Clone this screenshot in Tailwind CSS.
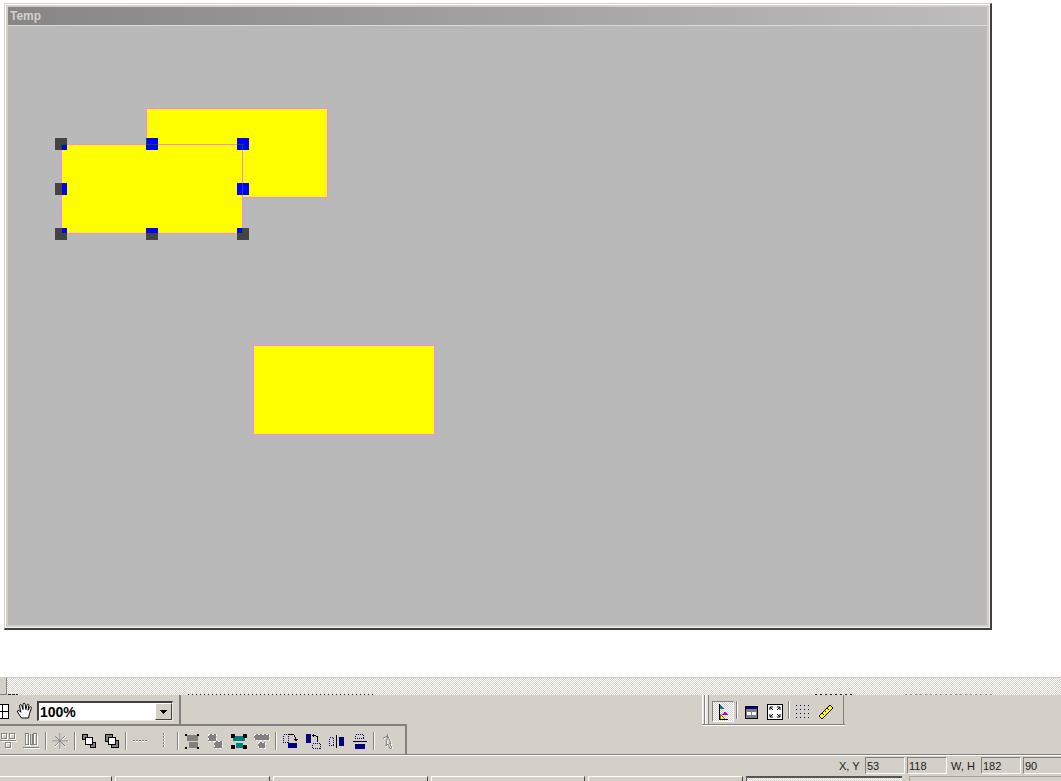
<!DOCTYPE html>
<html>
<head>
<meta charset="utf-8">
<script src="https://cdn.jsdelivr.net/npm/@tailwindcss/browser@4"></script>
</head>
<body class="bg-white overflow-hidden font-['Liberation_Sans',sans-serif]">
<div class="w-[1061px] h-[781px] overflow-hidden flex flex-col">
  <!-- upper white area with child window -->
  <div class="h-[677px] pl-[4px] pt-[3px] shrink-0">
    <div class="w-[988px] h-[627px] border-t border-l border-t-[#d4d0c8] border-l-[#d4d0c8] border-r-2 border-b-2 border-r-[#404040] border-b-[#404040]">
      <div class="w-full h-full border-t border-l border-white border-r border-b border-r-[#f0efe9] border-b-[#f0efe9] p-[2px] bg-[#d4d0c8] flex flex-col">
        <div class="h-[18px] shrink-0 bg-linear-to-r from-[#868686] to-[#bdbdbd] pl-[2px] flex items-center text-[12px] leading-none font-bold text-[#d4d0c8]">Temp</div>
        <div class="h-[1px] shrink-0 bg-[#dcdad2]"></div>
        <div class="relative flex-1 bg-[#b9b9b9]">
          <div class="absolute left-[138px] top-[82px] w-[182px] h-[90px] bg-[#ffff00] border border-[#ff80ff]"></div>
          <div class="absolute left-[245px] top-[319px] w-[182px] h-[90px] bg-[#ffff00] border border-[#ff80ff]"></div>
          <div class="absolute left-[53px] top-[118px] w-[182px] h-[90px] bg-[#ffff00] border border-[#ff80ff]"></div>
          <!-- handles -->
          <div class="absolute left-[47px] top-[112px] w-[12px] h-[12px] bg-[#444444]"><div class="absolute left-[6px] top-[6px] w-[6px] h-[6px] bg-[#0000ff] border-t border-l border-[#006400]"></div></div>
          <div class="absolute left-[138px] top-[112px] w-[12px] h-[12px] bg-[#0000ff]"><div class="absolute left-0 top-0 w-[12px] h-[7px] border-l border-b border-[#006400]"></div></div>
          <div class="absolute left-[229px] top-[112px] w-[12px] h-[12px] bg-[#0000ff]"><div class="absolute left-0 top-[6px] w-[6px] h-[6px] border-t border-r border-[#006400]"></div></div>
          <div class="absolute left-[47px] top-[157px] w-[12px] h-[12px] bg-[#444444]"><div class="absolute left-[7px] top-0 w-[5px] h-[12px] bg-[#0000ff]"></div></div>
          <div class="absolute left-[229px] top-[157px] w-[12px] h-[12px] bg-[#0000ff]"><div class="absolute left-[5px] top-0 w-[1px] h-[12px] bg-[#3030e8]"></div></div>
          <div class="absolute left-[47px] top-[202px] w-[12px] h-[12px] bg-[#444444]"><div class="absolute left-[7px] top-0 w-[5px] h-[5px] bg-[#0000ff]"></div></div>
          <div class="absolute left-[138px] top-[202px] w-[12px] h-[12px] bg-[#444444]"><div class="absolute left-0 top-0 w-[12px] h-[5px] bg-[#0000ff]"></div></div>
          <div class="absolute left-[229px] top-[202px] w-[12px] h-[12px] bg-[#444444]"><div class="absolute left-0 top-0 w-[6px] h-[5px] bg-[#0000ff] border-r border-[#006400]"></div></div>
        </div>
      </div>
    </div>
  </div>

  <!-- hatched scroll strip -->
  <div class="h-[18px] shrink-0 border-t border-[#c8c8c8] flex items-end bg-[repeating-conic-gradient(#d4d0c8_0_25%,#ffffff_0_50%)] bg-[length:2px_2px]">
    <div class="w-[7px] h-[17px] bg-[#d4d0c8] border-r border-b border-[#808080]"></div>
    <div class="ml-[1px] w-[10px] h-[1px] bg-[repeating-linear-gradient(90deg,#222_0_3px,transparent_3px_4px)]"></div>
    <div class="ml-[170px] w-[187px] h-[1px] bg-[repeating-linear-gradient(90deg,#222_0_1px,transparent_1px_4px)]"></div>
    <div class="ml-[440px] w-[40px] h-[1px] bg-[repeating-linear-gradient(90deg,#222_0_2px,transparent_2px_5px)]"></div>
    <div class="ml-[50px] w-[90px] h-[1px] bg-[repeating-linear-gradient(90deg,#999_0_2px,transparent_2px_5px)]"></div>
  </div>

  <!-- toolbar rows -->
  <div class="h-[29px] shrink-0 bg-[#d4d0c8] flex">
    <div class="w-[181px] h-full flex items-center border-r-2 border-r-[#808080] pr-[6px] pt-[3px]">
      <svg width="9" height="17" viewBox="0 0 9 17" shape-rendering="crispEdges" class="shrink-0"><rect x="-5" y="1.5" width="13" height="14" fill="#fff" stroke="#000"/><path d="M2.5 1.5V15.5M-5 8.5H8" stroke="#000"/></svg>
      <svg width="18" height="18" viewBox="0 0 18 17" class="ml-[7px] shrink-0"><path d="M5.5 15.5 L1.5 9.5 C0.8 8 2.6 7.2 3.6 8.5 L4.8 9.8 L3.6 3.5 C3.4 2 5.3 1.6 5.8 3.2 L7 7 L7 1.8 C7.1 0.4 9 0.4 9.2 1.8 L9.8 7 L11 2.6 C11.4 1.2 13.2 1.6 12.9 3 L12 7.8 L13.6 4.8 C14.3 3.7 15.9 4.4 15.3 5.8 L13.5 11 L12.5 15.5 Z" fill="#fff" stroke="#000" stroke-width="1"/></svg>
      <div class="ml-[3px] w-[136px] h-[20px] shrink-0 flex bg-white border-t-2 border-l-2 border-t-[#404040] border-l-[#404040] border-r border-b border-r-[#ece9e0] border-b-[#ece9e0]">
        <div class="flex-1 pl-[1px] text-[14px] font-bold leading-[18px] text-black">100%</div>
        <div class="w-[17px] h-[17px] bg-[#d4d0c8] border-t border-l border-t-white border-l-white border-r border-b border-r-[#404040] border-b-[#404040] flex items-center justify-center">
          <svg width="7" height="4" viewBox="0 0 7 4" shape-rendering="crispEdges"><path d="M0 0H7L3.5 4Z" fill="#000"/></svg>
        </div>
      </div>
    </div>
    <div class="w-[521px] h-full"></div>
    <div class="w-[143px] h-[29px] flex items-start relative">
      <div class="w-[3px] h-[29px] bg-[#e8e6e0] border-l border-r border-l-white border-r-[#808080]"></div>
      <div class="w-[4px] h-[29px] bg-[#e8e6e0] border-l border-r border-l-white border-r-[#808080]"></div>
      <div class="ml-[3px] mt-[6px] w-[22px] h-[21px] border-t border-l border-t-[#808080] border-l-[#808080] border-r border-b border-r-white border-b-white flex items-center justify-center bg-[repeating-conic-gradient(#d4d0c8_0_25%,#ffffff_0_50%)] bg-[length:2px_2px]">
        <svg width="14" height="16" viewBox="0 0 14 16" shape-rendering="crispEdges"><path d="M3.5 0V15.5H12" stroke="#000" fill="none"/><path d="M4 0.5L8 5H4Z" fill="#008080"/><path d="M5 11L12 11 9 7Z" fill="#c000c0"/><path d="M4 10.5V15L9 15Z" fill="#ffff00"/><path d="M4 10.5V15L9 15Z" fill="none" stroke="#000" stroke-width="0.5"/></svg>
      </div>
      <div class="ml-[2px] mt-[6px] w-[2px] h-[18px] border-l border-r border-l-[#808080] border-r-white"></div>
      <svg width="13" height="13" viewBox="0 0 13 13" shape-rendering="crispEdges" class="ml-[7px] mt-[11px]"><rect x=".5" y=".5" width="12" height="12" fill="#808080" stroke="#000"/><rect x="1" y="1" width="11" height="2" fill="#0000a0"/><circle cx="4" cy="7.5" r="2" fill="#fff"/><circle cx="9" cy="7.5" r="2" fill="#fff"/></svg>
      <svg width="16" height="16" viewBox="0 0 16 16" class="ml-[9px] mt-[9px]"><rect x=".5" y=".5" width="15" height="15" fill="#fff" stroke="#000"/><path d="M3 3L6 6M3 3V6M3 3H6M13 3L10 6M13 3V6M13 3H10M3 13L6 10M3 13V10M3 13H6M13 13L10 10M13 13V10M13 13H10" stroke="#000" fill="none"/></svg>
      <div class="ml-[5px] mt-[6px] w-[2px] h-[18px] border-l border-r border-l-[#808080] border-r-white"></div>
      <svg width="15" height="15" viewBox="0 0 15 15" shape-rendering="crispEdges" class="ml-[5px] mt-[9px]" fill="#000080"><rect x="1" y="1" width="1" height="1"/><rect x="5" y="1" width="1" height="1"/><rect x="9" y="1" width="1" height="1"/><rect x="13" y="1" width="1" height="1"/><rect x="1" y="5" width="1" height="1"/><rect x="5" y="5" width="1" height="1"/><rect x="9" y="5" width="1" height="1"/><rect x="13" y="5" width="1" height="1"/><rect x="1" y="9" width="1" height="1"/><rect x="5" y="9" width="1" height="1"/><rect x="9" y="9" width="1" height="1"/><rect x="13" y="9" width="1" height="1"/><rect x="1" y="13" width="1" height="1"/><rect x="5" y="13" width="1" height="1"/><rect x="9" y="13" width="1" height="1"/><rect x="13" y="13" width="1" height="1"/></svg>
      <svg width="16" height="16" viewBox="0 0 16 16" class="ml-[8px] mt-[9px]"><path d="M1 12L12 1L15 4L4 15Z" fill="#ffff00" stroke="#000"/><path d="M4 9L6 11M6.5 6.5L8 8M9 4L11 6" stroke="#000"/></svg>
      <div class="absolute left-[141px] top-0 w-[2px] h-[29px] border-l border-[#808080]"></div>
    </div>
  </div>
  <div class="h-[30px] shrink-0 bg-[#d4d0c8] flex items-start">
    <div class="w-[407px] h-[30px] border-t-2 border-t-[#808080] border-r-2 border-r-[#808080] flex items-center pt-[2px]">
      <div class="w-[20px] h-[22px] flex items-center justify-end pr-[3px] shrink-0">
        <svg width="17" height="18" viewBox="0 0 17 18" shape-rendering="crispEdges" fill="none"><path d="M1.5 1.5H6.5V6.5H1.5ZM9.5 1.5H14.5V6.5H9.5ZM5.5 10.5H10.5V15.5H5.5ZM0 8.5H16" stroke="#fff" transform="translate(1 1)"/><path d="M1.5 1.5H6.5V6.5H1.5ZM9.5 1.5H14.5V6.5H9.5ZM5.5 10.5H10.5V15.5H5.5ZM0 8.5H16" stroke="#808080"/></svg>
      </div>
      <div class="w-[23px] h-[22px] flex items-center justify-center shrink-0">
        <svg width="17" height="18" viewBox="0 0 17 18" shape-rendering="crispEdges" fill="none"><path d="M2.5 1.5V12.5H5.5V1.5ZM6.5 1.5V12.5M10.5 1.5V12.5H13.5V1.5ZM0 15.5H16" stroke="#fff" transform="translate(1 1)"/><path d="M2.5 1.5V12.5H5.5V1.5ZM7.5 1.5V12.5H9.5V1.5M10.5 1.5V12.5H13.5V1.5ZM0 15.5H16" stroke="#808080"/></svg>
      </div>
      <div class="mx-[2px] w-[2px] h-[18px] shrink-0 border-l border-r border-l-[#808080] border-r-white"></div>
      <div class="w-[23px] h-[22px] flex items-center justify-center shrink-0">
        <svg width="17" height="17" viewBox="0 0 17 17" fill="none"><path d="M8.5 0V17M0 8.5H17M3 3L14 14M14 3L3 14" stroke="#fff"/><path d="M8 0V16M0 8H16M3 3L13 13M13 3L3 13" stroke="#808080"/></svg>
      </div>
      <div class="ml-[2px] mr-[1px] w-[2px] h-[18px] shrink-0 border-l border-r border-l-[#808080] border-r-white"></div>
      <div class="w-[23px] h-[22px] flex items-center justify-center shrink-0">
        <svg width="14" height="14" viewBox="0 0 14 14" shape-rendering="crispEdges"><rect x=".5" y=".5" width="5" height="5" fill="#808080" stroke="#000"/><rect x="8.5" y="8.5" width="5" height="5" fill="#808080" stroke="#000"/><rect x="3.5" y="3.5" width="7" height="7" fill="#fff" stroke="#000"/></svg>
      </div>
      <div class="w-[23px] h-[22px] flex items-center justify-center shrink-0">
        <svg width="14" height="14" viewBox="0 0 14 14" shape-rendering="crispEdges"><rect x=".5" y=".5" width="7" height="7" fill="#808080" stroke="#000"/><rect x="6.5" y="6.5" width="7" height="7" fill="#808080" stroke="#000"/><rect x="3.5" y="3.5" width="7" height="7" fill="#fff" stroke="#000"/></svg>
      </div>
      <div class="mx-[2px] w-[2px] h-[18px] shrink-0 border-l border-r border-l-[#808080] border-r-white"></div>
      <div class="w-[23px] h-[22px] flex items-center justify-center shrink-0">
        <svg width="16" height="4" viewBox="0 0 16 4" shape-rendering="crispEdges"><path d="M0 1.5H15" stroke="#808080" stroke-dasharray="2 1"/><path d="M0 2.5H15" stroke="#fff" stroke-dasharray="2 1"/></svg>
      </div>
      <div class="w-[23px] h-[22px] flex items-center justify-center shrink-0">
        <svg width="4" height="16" viewBox="0 0 4 16" shape-rendering="crispEdges"><path d="M1.5 0V15" stroke="#808080" stroke-dasharray="2 1"/><path d="M2.5 0V15" stroke="#fff" stroke-dasharray="2 1"/></svg>
      </div>
      <div class="mx-[2px] w-[2px] h-[18px] shrink-0 border-l border-r border-l-[#808080] border-r-white"></div>
      <div class="w-[23px] h-[22px] flex items-center justify-center shrink-0">
        <svg width="15" height="15" viewBox="0 0 15 15" shape-rendering="crispEdges"><rect x="2" y="1" width="11" height="6" fill="#808080"/><rect x="4" y="8" width="9" height="6" fill="#808080"/><rect x="0" y="0" width="2" height="2"/><rect x="12" y="0" width="2" height="2"/><rect x="0" y="13" width="2" height="2"/><rect x="12" y="13" width="2" height="2"/></svg>
      </div>
      <div class="w-[23px] h-[22px] flex items-center justify-center shrink-0">
        <svg width="17" height="16" viewBox="0 0 17 16" shape-rendering="crispEdges"><rect x="1" y="1" width="8" height="7" fill="#808080" stroke="#fff" stroke-dasharray="2 2"/><rect x="7" y="8" width="8" height="7" fill="#808080" stroke="#fff" stroke-dasharray="2 2"/></svg>
      </div>
      <div class="w-[23px] h-[22px] flex items-center justify-center shrink-0">
        <svg width="16" height="15" viewBox="0 0 16 15" shape-rendering="crispEdges"><rect x="2" y="2" width="12" height="5" fill="#008080"/><rect x="5" y="9" width="7" height="5" fill="#008080"/><rect x="0" y="0" width="4" height="4"/><rect x="12" y="0" width="4" height="4"/><rect x="0" y="11" width="4" height="4"/><rect x="12" y="11" width="4" height="4"/></svg>
      </div>
      <div class="w-[23px] h-[22px] flex items-center justify-center shrink-0">
        <svg width="17" height="16" viewBox="0 0 17 16" shape-rendering="crispEdges"><rect x="1" y="1" width="15" height="6" fill="#808080" stroke="#fff" stroke-dasharray="2 2"/><rect x="5" y="9" width="7" height="6" fill="#808080" stroke="#fff" stroke-dasharray="2 2"/></svg>
      </div>
      <div class="mx-[2px] w-[2px] h-[18px] shrink-0 border-l border-r border-l-[#808080] border-r-white"></div>
      <div class="w-[23px] h-[22px] flex items-center justify-center shrink-0">
        <svg width="15" height="15" viewBox="0 0 15 15" shape-rendering="crispEdges" fill="none"><rect x=".5" y=".5" width="5" height="8" stroke="#000080" stroke-dasharray="1 1"/><rect x="5" y="9" width="9" height="5" fill="#000080"/><path d="M5 .5H10C12 .5 12.5 2 12.5 7M10.5 5.5H14.5M11.5 6.5H13.5" stroke="#000"/></svg>
      </div>
      <div class="w-[23px] h-[22px] flex items-center justify-center shrink-0">
        <svg width="15" height="15" viewBox="0 0 15 15" shape-rendering="crispEdges" fill="none"><rect x="0" y="0" width="5" height="9" fill="#000080"/><rect x="6.5" y="9.5" width="8" height="5" stroke="#000080" stroke-dasharray="1 1"/><path d="M11.5 8V4C11.5 2.5 10 1.5 7 1.5M7.5 0V3M6.5 1V2" stroke="#000"/></svg>
      </div>
      <div class="w-[23px] h-[22px] flex items-center justify-center shrink-0">
        <svg width="16" height="13" viewBox="0 0 16 13" shape-rendering="crispEdges" fill="none"><rect x=".5" y="2.5" width="4" height="8" stroke="#000080" stroke-dasharray="1 1"/><path d="M7.5 0V13" stroke="#000"/><rect x="10" y="2" width="5" height="9" fill="#000080"/></svg>
      </div>
      <div class="w-[23px] h-[22px] flex items-center justify-center shrink-0">
        <svg width="14" height="15" viewBox="0 0 14 15" shape-rendering="crispEdges" fill="none"><rect x="2.5" y=".5" width="8" height="4" stroke="#000080" stroke-dasharray="1 1"/><path d="M0 7.5H14" stroke="#000"/><rect x="2" y="10" width="10" height="5" fill="#000080"/></svg>
      </div>
      <div class="mx-[2px] w-[2px] h-[18px] shrink-0 border-l border-r border-l-[#808080] border-r-white"></div>
      <div class="w-[23px] h-[22px] flex items-center justify-center shrink-0">
        <svg width="13" height="16" viewBox="0 0 13 16" fill="none"><path d="M5.5 1V5M1 5.5L5 3M5.5 2L9 11L7.5 10.5L10 15L8 15.5L6 11L4 13Z" stroke="#fff" transform="translate(1 .6)"/><path d="M5.5 1V5M1 5.5L5 3M5.5 2L9 11L7.5 10.5L10 15L8 15.5L6 11L4 13Z" stroke="#808080"/></svg>
      </div>
    </div>
    <div class="ml-[295px] w-[143px] h-[2px] border-t border-b border-t-[#808080] border-b-white"></div>
  </div>

  <!-- status bar -->
  <div class="h-[22px] shrink-0 border-t border-t-[#808080] bg-[#d4d0c8] flex items-center pl-[839px] text-[11px] leading-none text-[#202020] shadow-[inset_0_1px_0_#ffffff] whitespace-nowrap">
    <span class="w-[26px] shrink-0 pt-[2px]">X, Y</span>
    <span class="w-[40px] h-[17px] shrink-0 pl-[1px] pt-[2px] flex items-center border-t border-l border-[#808080] border-r border-b border-r-white border-b-white">53</span>
    <span class="ml-[2px] w-[40px] h-[17px] shrink-0 pl-[1px] pt-[2px] flex items-center border-t border-l border-[#808080] border-r border-b border-r-white border-b-white">118</span>
    <span class="ml-[4px] w-[30px] shrink-0 pt-[2px]">W, H</span>
    <span class="w-[40px] h-[17px] shrink-0 pl-[1px] pt-[2px] flex items-center border-t border-l border-[#808080] border-r border-b border-r-white border-b-white">182</span>
    <span class="ml-[2px] w-[42px] h-[17px] shrink-0 pl-[1px] pt-[2px] flex items-center border-t border-l border-[#808080] border-r border-b border-r-white border-b-white">90</span>
  </div>

  <!-- task strip -->
  <div class="flex-1 bg-[#d4d0c8] flex items-start gap-[3px]">
    <div class="w-[112px] h-full border-t border-white border-r border-r-[#404040]"></div>
    <div class="w-[155px] h-full border-t border-l border-white border-r border-r-[#404040]"></div>
    <div class="w-[155px] h-full border-t border-l border-white border-r border-r-[#404040]"></div>
    <div class="w-[154px] h-full border-t border-l border-white border-r border-r-[#404040]"></div>
    <div class="w-[155px] h-full border-t border-l border-white border-r border-r-[#404040]"></div>
    <div class="w-[156px] h-full border-t-2 border-l border-[#555555] bg-[repeating-conic-gradient(#d4d0c8_0_25%,#ffffff_0_50%)] bg-[length:2px_2px]"></div>
    <div class="ml-[4px] flex-1 h-full border-t border-l border-[#a8a59d]"></div>
  </div>
</div>
</body>
</html>
